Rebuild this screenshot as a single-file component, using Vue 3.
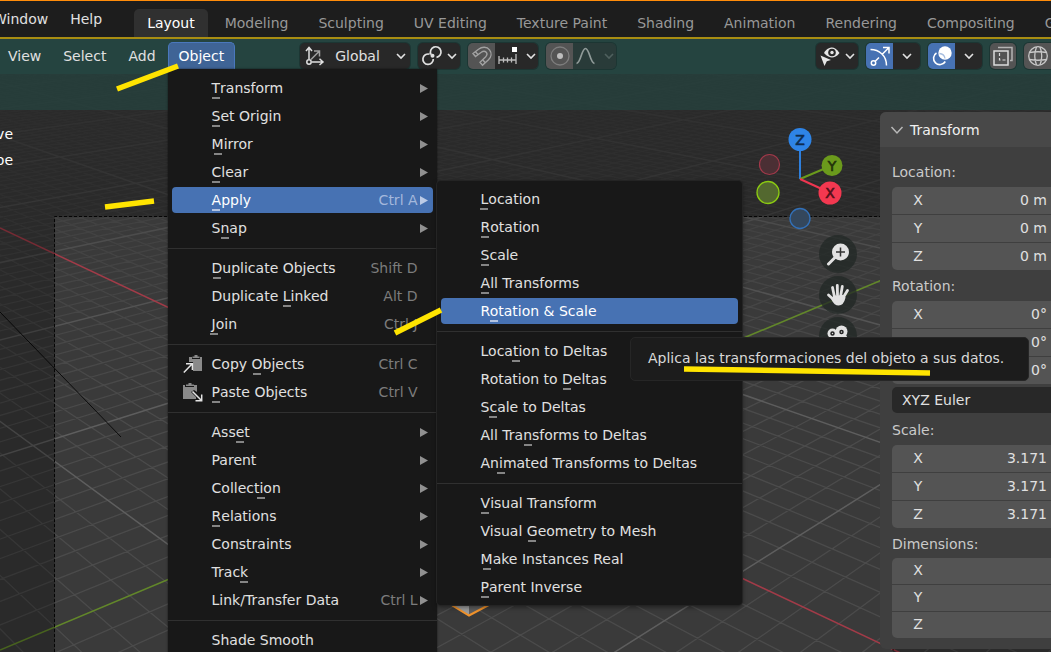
<script setup>
const tabs = ['Layout', 'Modeling', 'Sculpting', 'UV Editing', 'Texture Paint', 'Shading', 'Animation', 'Rendering', 'Compositing', 'Geometry Nodes']

// key: index of the underlined access letter
const objectMenu = [
  [
    { label: 'Transform', key: 0, sub: true },
    { label: 'Set Origin', key: 0, sub: true },
    { label: 'Mirror', key: 0, sub: true },
    { label: 'Clear', key: 0, sub: true },
    { label: 'Apply', key: 0, sub: true, hint: 'Ctrl A', active: true },
    { label: 'Snap', key: 1, sub: true },
  ],
  [
    { label: 'Duplicate Objects', key: 0, hint: 'Shift D' },
    { label: 'Duplicate Linked', key: 10, hint: 'Alt D' },
    { label: 'Join', key: 0, hint: 'Ctrl J' },
  ],
  [
    { label: 'Copy Objects', key: 5, hint: 'Ctrl C', icon: 'copy' },
    { label: 'Paste Objects', key: 0, hint: 'Ctrl V', icon: 'paste' },
  ],
  [
    { label: 'Asset', key: 3, sub: true },
    { label: 'Parent', key: -1, sub: true },
    { label: 'Collection', key: 7, sub: true },
    { label: 'Relations', key: 0, sub: true },
    { label: 'Constraints', key: -1, sub: true },
    { label: 'Track', key: 4, sub: true },
    { label: 'Link/Transfer Data', key: -1, sub: true, hint: 'Ctrl L' },
  ],
  [{ label: 'Shade Smooth', key: -1 }],
]

const applyMenu = [
  [
    { label: 'Location', key: 0 },
    { label: 'Rotation', key: 0 },
    { label: 'Scale', key: 0 },
    { label: 'All Transforms', key: 0 },
    { label: 'Rotation & Scale', key: 1, active: true },
  ],
  [
    { label: 'Location to Deltas', key: 4 },
    { label: 'Rotation to Deltas', key: 12 },
    { label: 'Scale to Deltas', key: 1 },
    { label: 'All Transforms to Deltas', key: 7 },
    { label: 'Animated Transforms to Deltas', key: 2 },
  ],
  [
    { label: 'Visual Transform', key: 0 },
    { label: 'Visual Geometry to Mesh', key: 7 },
    { label: 'Make Instances Real', key: 0 },
    { label: 'Parent Inverse', key: 0 },
  ],
]

const split = (it) =>
  it.key < 0
    ? [it.label, '', '']
    : [it.label.slice(0, it.key), it.label[it.key], it.label.slice(it.key + 1)]

const fieldSets = [
  { name: 'Location', values: ['0 m', '0 m', '0 m'] },
  { name: 'Rotation', values: ['0°', '0°', '0°'], mode: true },
  { name: 'Scale', values: ['3.171', '3.171', '3.171'] },
  { name: 'Dimensions', values: ['', '', ''], compact: true },
]
const axes = ['X', 'Y', 'Z']

// Floor grid in perspective: both families of lines run to a vanishing point on the horizon.
const origin = [473.7, 451.4]
const vpX = [-742, -122]
const vpY = [1841, -122]
const kx = 0.01777
const ky = 0.01675
const project = (a, b) => {
  const w = 1 + a * kx + b * ky
  return [0, 1].map((i) => ((origin[i] + a * kx * vpX[i] + b * ky * vpY[i]) / w).toFixed(1))
}
const seg = (p, q) => `M${p[0]} ${p[1]}L${q[0]} ${q[1]}`
let minor = ''
let major = ''
for (let n = -40; n <= 120; n++) {
  if (n === 0) continue
  const nearA = (0.2 - 1 - n * ky) / kx
  const nearB = (0.2 - 1 - n * kx) / ky
  const d = seg(project(nearA, n), project(400, n)) + seg(project(n, nearB), project(n, 400))
  if (n % 10 === 0) major += d
  else minor += d
}
</script>

<template>
  <div class="app">
    <header class="topbar">
      <nav class="appmenu">
        <button type="button">Window</button>
        <button type="button">Help</button>
      </nav>
      <nav class="tabs">
        <button v-for="(t, i) in tabs" :key="t" type="button" :class="{ current: i === 0 }">{{ t }}</button>
      </nav>
    </header>

    <main class="view">
      <svg class="scene" viewBox="0 39 1051 613" preserveAspectRatio="xMinYMin slice" aria-hidden="true">
        <defs>
          <linearGradient id="fade" gradientUnits="userSpaceOnUse" x1="0" y1="40" x2="0" y2="420">
            <stop offset="0" stop-color="#fff" stop-opacity="0.12" />
            <stop offset="0.45" stop-color="#fff" stop-opacity="0.45" />
            <stop offset="1" stop-color="#fff" stop-opacity="1" />
          </linearGradient>
          <mask id="depth" maskUnits="userSpaceOnUse" x="0" y="39" width="1051" height="613">
            <rect x="0" y="39" width="1051" height="613" fill="url(#fade)" />
          </mask>
        </defs>
        <rect x="0" y="39" width="1051" height="613" fill="#3a3a3a" />
        <g mask="url(#depth)" fill="none">
          <path :d="minor" stroke="#4b4b4b" stroke-width="1.3" />
          <path :d="major" stroke="#5e5e5e" stroke-width="1.5" />
        </g>
        <path d="M0 228L1051 724" stroke="#a23b48" stroke-width="1.5" />
        <path d="M0 650L1051 209" stroke="#62872a" stroke-width="1.6" />
        <path d="M0 312L121 437" stroke="#0c0c0c" stroke-width="1" />
        <path d="M440 590L440 598L469 615L500 599L500 590Z" fill="#5e5e5e" />
        <path d="M440 590L440 598L469 615V590Z" fill="#9c9c9c" />
        <path d="M440 598L469 615.500L500 599" fill="none" stroke="#f0922b" stroke-width="2" />
        <path d="M0 39H1051V652H893V217H55V652H0Z" fill="#000" fill-opacity="0.27" />
        <path d="M54.500 652V216.500H893V652" fill="none" stroke="#050505" stroke-width="1" stroke-dasharray="3 2" />
      </svg>

      <div class="toolheader">
        <nav class="menus">
          <button type="button">View</button>
          <button type="button">Select</button>
          <button type="button">Add</button>
          <div class="anchor">
            <button type="button" class="open">Object</button>
            <div class="menu" role="menu">
              <div v-for="(group, g) in objectMenu" :key="g" class="group">
                <div v-for="it in group" :key="it.label" class="slot">
                  <button type="button" role="menuitem" class="item" :class="{ active: it.active }">
                    <span class="icon">
                      <svg v-if="it.icon === 'copy'" width="20" height="20" viewBox="0 0 20 20">
                        <path d="M6 3h3v2h8V3h2v14H10V8H6z" fill="#8a8a8a" />
                        <path d="M9.500 4V2.500h2V1h3v1.500h2V4z" fill="#8a8a8a" />
                        <path d="M0.800 18.500L9 10M3 9.700h6.400V16" fill="none" stroke="#e4e4e4" stroke-width="1.500" />
                      </svg>
                      <svg v-else-if="it.icon === 'paste'" width="20" height="20" viewBox="0 0 20 20">
                        <path d="M0 3h2v2h9V3h3v7l-3-2-3 2 5 5v2H0z" fill="#8a8a8a" />
                        <path d="M3 4V2.500h2.500V1h3v1.500H11V4z" fill="#8a8a8a" />
                        <path d="M9.500 9.500L18.500 18.500M12.500 18.700h6.200v-6.200" fill="none" stroke="#e4e4e4" stroke-width="1.500" />
                      </svg>
                    </span>
                    <span class="text">{{ split(it)[0] }}<span v-if="it.key >= 0" class="mn">{{ split(it)[1] }}</span>{{ split(it)[2] }}</span>
                    <span class="hint">{{ it.hint }}</span>
                    <span class="arrow"><svg v-if="it.sub" width="8" height="9" viewBox="0 0 8 9"><path d="M0 0L8 4.500L0 9Z" fill="currentColor" /></svg></span>
                  </button>
                  <div v-if="it.active" class="menu submenu" role="menu">
                    <div v-for="(sg, s) in applyMenu" :key="s" class="group">
                      <button v-for="si in sg" :key="si.label" type="button" role="menuitem" class="item" :class="{ active: si.active }">
                        <span class="icon"></span>
                        <span class="text">{{ split(si)[0] }}<span class="mn">{{ split(si)[1] }}</span>{{ split(si)[2] }}</span>
                      </button>
                    </div>
                  </div>
                </div>
              </div>
            </div>
          </div>
        </nav>

        <div class="tools">
          <button type="button" class="tool orient">
            <svg width="22" height="22" viewBox="0 0 22 22" fill="none" stroke="#e0e0e0" stroke-width="1.500">
              <path d="M5 14V3M2 6l3-3.500L8 6M8 17h10.500M15.500 13.800L19 17l-3.500 3" />
              <circle cx="5" cy="17" r="2.200" />
              <path d="M7 14.500L15 6.500M10 6h5.500v5.500" stroke="#a0a0a0" />
            </svg>
            <span>Global</span>
            <svg class="chev" width="10" height="7" viewBox="0 0 10 7"><path d="M1 1l4 4 4-4" /></svg>
          </button>
          <button type="button" class="tool pivot" aria-label="Pivot point">
            <svg width="22" height="22" viewBox="0 0 22 22" fill="none" stroke="#e0e0e0" stroke-width="1.700">
              <path d="M10 9.500A5.300 5.300 0 1 1 15.500 12.300M8.500 9.200A5.200 5.200 0 1 0 12.300 14" />
              <circle cx="11.500" cy="10.800" r="2" fill="#e0e0e0" stroke="none" />
            </svg>
            <svg class="chev" width="10" height="7" viewBox="0 0 10 7"><path d="M1 1l4 4 4-4" /></svg>
          </button>
          <div class="pair">
            <button type="button" class="half grey" aria-label="Snap">
              <svg width="22" height="22" viewBox="0 0 22 22" fill="none" stroke="#a2a2a2" stroke-width="1.400">
                <path d="M2 8.500L7.500 4.300C11 1.500 16 1.500 18.500 4.800C21 8 20.300 12 17.500 14.800L11.500 20.300L9 17.300L14.500 12C16.200 10.200 16.300 8.500 15.200 7.300C14 6 12 6 10.300 7.300L4.500 11.500Z" />
                <path d="M4.500 6.700l2.600 3M11.700 14.700l2.600 3" />
              </svg>
            </button>
            <button type="button" class="half wide" aria-label="Snap to increment">
              <svg width="22" height="22" viewBox="0 0 22 22" fill="none" stroke="#bdbdbd" stroke-width="1.300">
                <path d="M2 11v8M2 15h17M6.500 12.500v5M10.500 12.500v5M14.500 12.500v5M19 9v10" />
                <rect x="15" y="2" width="5" height="5" fill="#fff" stroke="none" />
              </svg>
              <svg class="chev" width="10" height="7" viewBox="0 0 10 7"><path d="M1 1l4 4 4-4" /></svg>
            </button>
          </div>
          <div class="pair">
            <button type="button" class="half grey" aria-label="Proportional editing">
              <svg width="22" height="22" viewBox="0 0 22 22"><circle cx="11" cy="11" r="9" fill="none" stroke="#7d7d7d" stroke-width="1.300" /><circle cx="11" cy="11" r="3" fill="#bdbdbd" /></svg>
            </button>
            <button type="button" class="half wide dim" aria-label="Falloff">
              <svg width="22" height="22" viewBox="0 0 22 22"><path d="M1.500 18.500C6 18 6.500 3.500 10.500 3.500S15 18 19.500 18.500" fill="none" stroke="#8f9a98" stroke-width="1.700" /></svg>
              <svg class="chev" width="10" height="7" viewBox="0 0 10 7"><path d="M1 1l4 4 4-4" /></svg>
            </button>
          </div>
        </div>

        <div class="tools right">
          <button type="button" class="tool pivot" aria-label="Object visibility">
            <svg width="22" height="22" viewBox="0 0 22 22">
              <path d="M5 8C8 3 11 2.500 13 2.500S18 4 20.500 8C18 11.500 15 12.500 13 12.500S8 11.500 5 8Z" fill="#e6e6e6" />
              <circle cx="13" cy="7.500" r="3.800" fill="#282828" /><circle cx="13" cy="7.500" r="1.700" fill="#e6e6e6" />
              <path d="M1.500 10.500L12 15L7.800 16.200L5.500 21Z" fill="#e6e6e6" />
            </svg>
            <svg class="chev" width="10" height="7" viewBox="0 0 10 7"><path d="M1 1l4 4 4-4" /></svg>
          </button>
          <div class="pair">
            <button type="button" class="half blue" aria-label="Gizmos">
              <svg width="22" height="22" viewBox="0 0 22 22" fill="none" stroke="#fff" stroke-width="1.500">
                <path d="M1.500 4.500C10 4.500 17.500 10.500 17.500 20.500M6 16.500L10 12.500M13 9.500L19.500 3M14 2.500h6v6" />
                <circle cx="4.500" cy="18" r="2.200" />
              </svg>
            </button>
            <button type="button" class="half" aria-label="Gizmo options"><svg class="chev" width="10" height="7" viewBox="0 0 10 7"><path d="M1 1l4 4 4-4" /></svg></button>
          </div>
          <div class="pair">
            <button type="button" class="half blue" aria-label="Overlays">
              <svg width="22" height="22" viewBox="0 0 22 22">
                <circle cx="14" cy="8" r="6.700" fill="#fff" />
                <path d="M5.500 8A6.300 6.300 0 1 0 14.300 16.500" fill="none" stroke="#fff" stroke-width="1.600" />
                <path d="M8.500 8.500A6 6 0 0 1 14 13.500" fill="none" stroke="#a9bfe0" stroke-width="1.300" />
              </svg>
            </button>
            <button type="button" class="half" aria-label="Overlay options"><svg class="chev" width="10" height="7" viewBox="0 0 10 7"><path d="M1 1l4 4 4-4" /></svg></button>
          </div>
          <button type="button" class="tool square" aria-label="X-ray">
            <svg width="22" height="22" viewBox="0 0 22 22" fill="none" stroke="#dcdcdc" stroke-width="1.500">
              <rect x="2" y="6" width="14" height="14" /><path d="M6 2.500h14v13h-2" stroke="#b4b4b4" />
              <path d="M7.500 8v7H14" stroke-width="1.200" stroke-dasharray="3 2" />
            </svg>
          </button>
          <button type="button" class="tool square cut" aria-label="Wireframe shading">
            <svg width="22" height="22" viewBox="0 0 22 22" fill="none" stroke="#c8c8c8" stroke-width="1.300">
              <circle cx="11" cy="11" r="9.300" /><path d="M2.500 7.500Q11 6 19.500 7.500M2.500 14.500Q11 16 19.500 14.500M9.500 2Q6 11 9.500 20M13 2Q16.500 11 13 20" />
            </svg>
          </button>
        </div>
      </div>

      <div class="strip"></div>

      <div class="below">
        <div class="info"><span>ve</span><span>be</span></div>
        <aside class="panel">
          <h2><svg width="14" height="10" viewBox="0 0 14 10"><path d="M1.500 2l5.500 6 5.500-6" fill="none" stroke="#b8b8b8" stroke-width="1.500" /></svg>Transform</h2>
          <div class="body">
            <fieldset v-for="f in fieldSets" :key="f.name" :class="{ compact: f.compact }">
              <legend>{{ f.name }}:</legend>
              <div class="rows">
                <label v-for="(v, i) in f.values" :key="i"><span>{{ axes[i] }}</span><input type="text" :value="v" :aria-label="f.name + ' ' + axes[i]" /></label>
              </div>
              <select v-if="f.mode" aria-label="Rotation mode"><option>XYZ Euler</option></select>
            </fieldset>
          </div>
        </aside>
      </div>

      <svg class="gizmo" width="100" height="110" viewBox="750 125 100 110" aria-hidden="true">
        <g stroke-width="2" fill="none">
          <path d="M800 179V145" stroke="#2e7fdc" /><path d="M800 179L826 168" stroke="#6b9a1c" /><path d="M800 179L824 190" stroke="#ee3650" />
        </g>
        <circle cx="769.500" cy="164.500" r="10" fill="#4b2f34" stroke="#a2394a" stroke-width="1.200" />
        <circle cx="768" cy="192.500" r="11" fill="#53682f" stroke="#8bca12" stroke-width="1.300" />
        <circle cx="800" cy="218.500" r="10" fill="#34475c" stroke="#3270b8" stroke-width="1.300" />
        <circle cx="800" cy="139.500" r="11.500" fill="#2e84e6" /><circle cx="832" cy="165.500" r="10.500" fill="#6b9a1c" /><circle cx="830" cy="193" r="11.500" fill="#f33850" />
        <g font-family="DejaVu Sans, sans-serif" font-size="14" stroke-width="0.6" text-anchor="middle">
          <text x="800" y="145" fill="#0d2b4e" stroke="#0d2b4e">Z</text><text x="832" y="171" fill="#22330a" stroke="#22330a">Y</text><text x="830" y="198" fill="#52101a" stroke="#52101a">X</text>
        </g>
      </svg>

      <div class="navigate">
        <button type="button" aria-label="Zoom">
          <svg width="24" height="24" viewBox="0 0 24 24"><circle cx="14.500" cy="10" r="8.500" fill="#e2e2e2" /><path d="M9 15.500L2.500 22" stroke="#e2e2e2" stroke-width="3" stroke-linecap="round" /><path d="M14.500 5.500v9M10 10h9" stroke="#333" stroke-width="1.500" /></svg>
        </button>
        <button type="button" aria-label="Pan">
          <svg width="24" height="24" viewBox="0 0 24 24" fill="none" stroke="#e2e2e2" stroke-linecap="round" stroke-linejoin="round">
            <path d="M8.300 13L6.500 4.500M11.500 12L11.300 2.500M14.800 12L16.300 3.500M17.500 14L21.500 7.500M8 17L2.500 12" stroke-width="2.800" />
            <path d="M8 13.500L17 13L18.500 14.500C17.500 19 16 21.500 12.500 21.500C9.500 21.500 8 19.500 6.500 16.500Z" fill="#e2e2e2" stroke-width="2" />
          </svg>
        </button>
        <button type="button" aria-label="Camera view">
          <svg width="24" height="24" viewBox="0 0 24 24" fill="#e2e2e2"><circle cx="6.500" cy="9.500" r="5" /><circle cx="15.500" cy="7.500" r="6" /><rect x="3" y="11" width="18" height="10" rx="2" /><g fill="none" stroke="#222" stroke-width="1.500"><circle cx="6.500" cy="9.500" r="1.500" /><circle cx="15.500" cy="8" r="1.500" /></g></svg>
        </button>
      </div>
    </main>

    <div class="tooltip" role="tooltip">Aplica las transformaciones del objeto a sus datos.</div>

    <svg class="marks" width="1051" height="652" viewBox="0 0 1051 652" fill="none" stroke="#ffe400" stroke-width="5.500" aria-hidden="true">
      <path d="M117 89L178 66M105 207L154 201M395 333L441 310M684 369L930 373" />
    </svg>
  </div>
</template>

<style>
body { margin: 0; overflow: hidden; background: #1d1d1d; }
</style>

<style scoped>
.app {
  position: relative; display: flex; flex-direction: column; box-sizing: border-box;
  height: 100vh; overflow: hidden; border-top: 1px solid #ff8c0a;
  font-family: "DejaVu Sans", "Open Sans", sans-serif; font-size: 14px; line-height: 20px; color: #e0e0e0;
}
button, input, select { font: inherit; color: inherit; border: 0; margin: 0; padding: 0; background: none; white-space: nowrap; }
.topbar { display: flex; flex: none; height: 36px; background: #1d1d1d; border-bottom: 2px solid #a88d12; overflow: hidden; }
.appmenu { display: flex; gap: 22px; height: 36px; margin-left: -7px; align-items: center; }
.tabs { display: flex; gap: 4px; padding-top: 8px; margin-left: 32px; }
.tabs button { padding: 0 13px; height: 28px; color: #989898; border-radius: 5px 5px 0 0; flex: none; }
.tabs .current { background: #303030; color: #fff; }

.view { position: relative; flex: 1; display: flex; flex-direction: column; min-height: 0; }
.scene { position: absolute; inset: 0; width: 100%; height: 100%; }
.toolheader { position: relative; z-index: 3; display: flex; align-items: flex-end; height: 30px; padding-bottom: 5px; flex: none; background: #254440; }
.strip { position: relative; height: 36px; flex: none; background: rgba(37, 68, 64, 0.7); }
.menus { display: flex; margin-left: -2px; gap: 2px; }
.menus > button, .open { height: 27px; padding: 0 10px; display: block; }
.anchor { position: relative; }
.open { background: #3f6496; border: 1px solid #4a78bd; border-bottom: 0; border-radius: 5px 5px 0 0; color: #fff; }

.menu { position: absolute; top: 100%; left: 0; width: 269px; padding: 5px 0; box-sizing: border-box; background: #181818; box-shadow: 0 0 2px rgba(0, 0, 0, 0.6); }
.submenu { top: -5px; left: 269px; width: 305px; padding: 4px 0; border-radius: 4px; z-index: 2; box-shadow: 0 0 0 1px #242424, 0 2px 5px rgba(0, 0, 0, 0.5); }
.group { display: flex; flex-direction: column; }
.group + .group { margin-top: 6px; padding-top: 5px; border-top: 1px solid #303030; }
.slot { position: relative; display: flow-root; }
.item { display: flex; align-items: center; width: calc(100% - 8px); height: 26px; margin: 1px 4px; padding-right: 4px; border-radius: 4px; text-align: left; }
.item.active { background: #4772b3; color: #fff; }
.icon { width: 29px; height: 20px; padding-left: 11px; flex: none; }
.text { flex: 1; }
.hint { color: #7c7c7c; margin-right: 2px; }
.arrow { width: 9px; color: #909090; display: flex; }
.active .hint { color: #a4b8dc; }
.active .arrow { color: #bccbe6; }
.mn { position: relative; }
.mn::after { content: ""; position: absolute; left: calc(50% - 4px); width: 8px; height: 2px; top: 17px; background: #858585; }
.active > .text .mn::after { background: #b4c4e0; }

.tools { display: flex; gap: 8px; margin-left: 65px; }
.tools.right { margin-left: auto; }
.tool { display: flex; align-items: center; height: 26px; background: #282828; border-radius: 5px; box-sizing: border-box; box-shadow: 0 0 0 1px rgba(20, 40, 38, 0.5); }
.orient { width: 110px; padding: 0 4px; gap: 9px; }
.orient span { flex: 1; text-align: left; }
.pivot { width: 42px; padding: 0 3px; justify-content: space-between; }
.pair { display: flex; border-radius: 5px; overflow: hidden; box-shadow: 0 0 0 1px rgba(20, 40, 38, 0.5); }
.half { display: flex; align-items: center; justify-content: center; height: 26px; width: 27px; background: #282828; }
.wide { width: 43px; padding: 0 2px; justify-content: space-between; }
.grey { background: #545454; }
.blue { background: #4772b3; }
.dim { background: #293b39; }
.square { width: 26px; background: #545454; justify-content: center; }
.cut { width: 27px; border-radius: 5px 0 0 5px; }
.chev { fill: none; stroke: #e2e2e2; stroke-width: 1.6px; flex: none; }
.dim .chev { stroke: #4f605e; }
.tool svg, .half svg { flex: none; }

.below { position: relative; flex: 1; display: flex; justify-content: space-between; align-items: flex-start; min-height: 0; padding-top: 2px; }
.info { display: flex; flex-direction: column; align-items: flex-end; width: 13px; padding-top: 9px; line-height: 26px; color: #fff; }
.panel { width: 171px; background: #3f3f3f; border-radius: 6px 0 0 6px; overflow: hidden; }
.panel h2 { display: flex; align-items: center; gap: 6px; height: 35px; margin: 0; padding: 0 0 0 10px; box-sizing: border-box; background: #484848; font: inherit; color: #f0f0f0; }
.body { padding: 11px 0 11px 12px; display: flex; flex-direction: column; gap: 2px; }
fieldset { border: 0; margin: 0; padding: 0; min-width: 0; }
legend { padding: 0; height: 29px; line-height: 28px; color: #cacaca; float: left; width: 100%; }
.rows { clear: both; display: flex; flex-direction: column; gap: 1px; border-radius: 5px 0 0 5px; overflow: hidden; }
.rows label { display: flex; align-items: center; height: 27px; padding-bottom: 2px; box-sizing: border-box; background: #545454; }
.rows span { width: 52px; text-align: center; flex: none; }
.rows input { flex: 1; min-width: 0; padding-right: 4px; text-align: right; }
.compact legend { height: 28px; }
.compact .rows label { height: 26px; }
select { appearance: none; display: block; width: 100%; height: 26px; margin: 3px 0 1px; padding-left: 10px; background: #282828; border-radius: 5px 0 0 5px; }

.gizmo { position: absolute; right: 201px; top: 86px; }
.navigate { position: absolute; right: 194px; top: 196px; display: flex; flex-direction: column; gap: 3px; }
.navigate button { width: 38px; height: 38px; border-radius: 50%; background: rgba(34, 40, 38, 0.75); display: flex; align-items: center; justify-content: center; }

.tooltip { position: absolute; z-index: 5; left: 630px; top: 336px; padding: 10px 24px 12px 17px; background: #1c1c1c; border: 1px solid #262626; border-radius: 5px; color: #d8d8d8; white-space: nowrap; }
.marks { position: absolute; z-index: 6; left: 0; top: -1px; pointer-events: none; }
</style>
